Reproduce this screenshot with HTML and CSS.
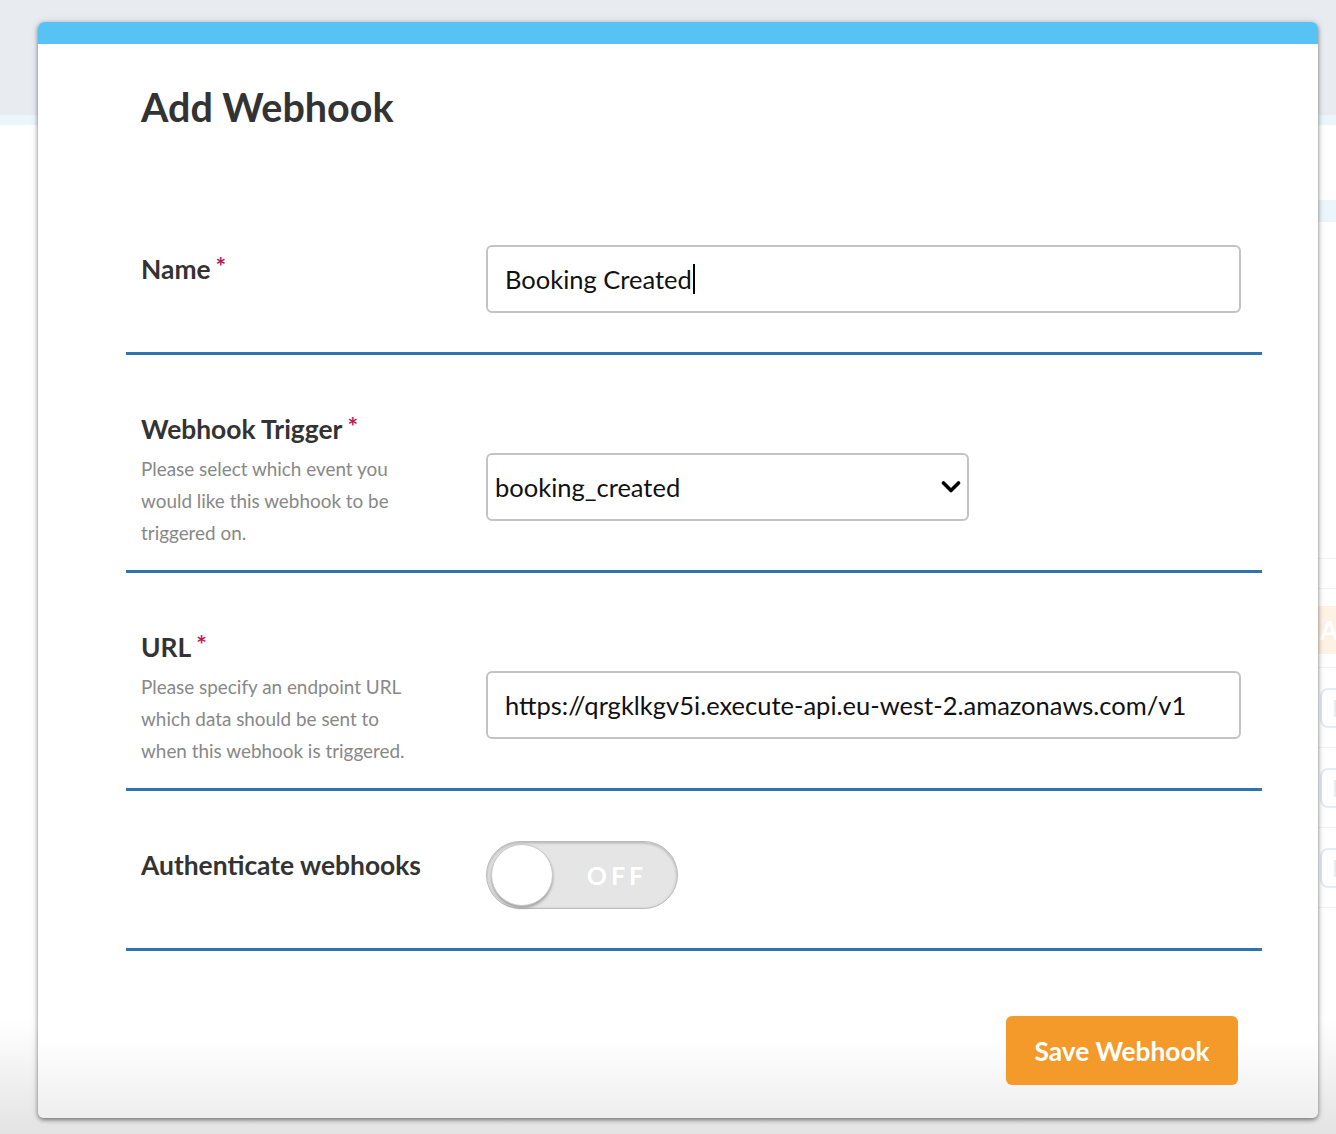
FILE: index.html
```html
<!DOCTYPE html>
<html lang="en">
<head>
<meta charset="utf-8">
<title>Add Webhook</title>
<link rel="stylesheet" href="styles.css">
</head>
<body>
<div class="app">
  <header class="app-header"></header>
  <div class="app-subbar"></div>
  <main class="app-main">
    <div class="app-thead"></div>
    <div class="app-list">
      <div class="app-sep"></div>
      <div class="app-row app-row--toolbar">
        <span class="app-spacer"></span>
        <span class="app-add">Add Webhook</span>
      </div>
      <div class="app-row">
        <span class="app-spacer"></span>
        <span class="app-edit">Edit</span>
      </div>
      <div class="app-row">
        <span class="app-spacer"></span>
        <span class="app-edit">Edit</span>
      </div>
      <div class="app-row">
        <span class="app-spacer"></span>
        <span class="app-edit">Edit</span>
      </div>
    </div>
  </main>
</div>

<div class="modal">
  <div class="modal-bar"></div>
  <div class="modal-body">
    <h1 class="modal-title">Add Webhook</h1>
    <form class="form">
      <div class="field">
        <div class="field-info">
          <label class="field-label">Name<span class="req">*</span></label>
        </div>
        <div class="field-control">
          <div class="text-input">Booking Created<span class="caret"></span></div>
        </div>
      </div>

      <div class="field">
        <div class="field-info">
          <label class="field-label">Webhook Trigger<span class="req">*</span></label>
          <p class="field-help">Please select which event you would like this webhook to be triggered on.</p>
        </div>
        <div class="field-control field-control--low">
          <div class="select-wrap">
            <select class="select">
              <option>booking_created</option>
            </select>
            <svg class="select-arrow" width="20" height="14" viewBox="0 0 20 14"><path d="M2.5 3 L10 10.5 L17.5 3" fill="none" stroke="#000" stroke-width="3.6" stroke-linecap="round" stroke-linejoin="round"/></svg>
          </div>
        </div>
      </div>

      <div class="field">
        <div class="field-info">
          <label class="field-label">URL<span class="req">*</span></label>
          <p class="field-help">Please specify an endpoint URL which data should be sent to when this webhook is triggered.</p>
        </div>
        <div class="field-control field-control--low">
          <div class="text-input">https://qrgklkgv5i.execute-api.eu-west-2.amazonaws.com/v1</div>
        </div>
      </div>

      <div class="field">
        <div class="field-info">
          <label class="field-label">Authenticate webhooks</label>
        </div>
        <div class="field-control">
          <div class="toggle">
            <span class="toggle-knob"></span>
            <span class="toggle-text">OFF</span>
          </div>
        </div>
      </div>
    </form>
    <div class="modal-footer">
      <button class="btn-save" type="button">Save Webhook</button>
    </div>
  </div>
</div>
</body>
</html>
```

FILE: styles.css
```css
* { box-sizing: border-box; }

html, body {
  margin: 0;
  padding: 0;
}

body {
  width: 1336px;
  height: 1134px;
  overflow: hidden;
  font-family: Lato, "Open Sans", "Liberation Sans", sans-serif;
  position: relative;
  background: #fff;
}

/* ---------- background app ---------- */
.app {
  height: 1134px;
  width: 1440px;
  background: linear-gradient(to bottom, #fff 0, #fff 1020px, #e3e3e3 1134px);
}

.app-header {
  height: 115px;
  background: #e8ecf0;
}

.app-subbar {
  height: 10px;
  background: #eaf6fc;
}

.app-main {
  margin-left: 1100px;
  padding-top: 75px;
}

.app-thead {
  height: 22px;
  background: #eaf5fc;
}

.app-list {
  margin-top: 336px;
}

.app-sep {
  height: 30px;
  border-top: 1px solid #f1f1f1;
}

.app-row {
  display: flex;
  align-items: center;
  height: 80px;
  border-bottom: 1px solid #f1f1f1;
}

.app-row--toolbar {
  border-top: 1px solid #f1f1f1;
  align-items: flex-start;
  padding-top: 17px;
}

.app-spacer {
  width: 218px;
  flex: none;
}

.app-add {
  background: #fdf2e4;
  color: #fff;
  font-weight: 700;
  font-size: 26px;
  line-height: 48px;
  padding: 0 8px 0 2px;
  white-space: nowrap;
}

.app-edit {
  margin-left: 2px;
  border: 2px solid #e3edf3;
  border-radius: 8px;
  color: #e1ebf1;
  font-size: 24px;
  line-height: 36px;
  padding: 0 14px 0 10px;
  white-space: nowrap;
}

/* ---------- modal ---------- */
.modal {
  position: absolute;
  top: 22px;
  left: 38px;
  width: 1280px;
  border-radius: 6px;
  overflow: hidden;
  background: linear-gradient(to bottom, #fff 0, #fff calc(100% - 80px), #eeeeee 100%);
  box-shadow: 0 2px 4px rgba(0, 0, 0, 0.45), 0 0 8px rgba(0, 0, 0, 0.12);
}

.modal-bar {
  height: 22px;
  background: #57c3f4;
}

.modal-body {
  padding: 0 56px 33px 88px;
}

.modal-title {
  margin: 39px 0 0 15px;
  font-size: 39.5px;
  line-height: 47px;
  font-weight: 700;
  color: #333;
}

.form {
  margin-top: 65px;
}

.field {
  display: grid;
  grid-template-columns: 345px 1fr;
  align-items: start;
  padding: 50px 21px 21px 15px;
  border-bottom: 3px solid #2e74ae;
}

.field-info {
  padding-top: 10px;
}

.field-label {
  display: block;
  font-size: 26.4px;
  line-height: 29px;
  font-weight: 700;
  color: #333;
}

.req {
  color: #c0175d;
  font-size: 25px;
  font-weight: 700;
  line-height: 0;
  margin-left: 5px;
  vertical-align: 3px;
}

.field-help {
  margin: 9px 0 0;
  font-size: 18.9px;
  line-height: 32px;
  color: #888;
  max-width: 275px;
}

.field-control {
  margin-bottom: 18px;
}

.field-control--low {
  margin-top: 48px;
  margin-bottom: 0;
}

.text-input {
  height: 68px;
  border: 2px solid #c3c3c3;
  border-radius: 6px;
  padding: 0 17px;
  display: flex;
  align-items: center;
  font-size: 25.5px;
  color: #111;
  background: #fff;
  white-space: nowrap;
  overflow: hidden;
}

.caret {
  display: inline-block;
  width: 2px;
  height: 30px;
  background: #000;
  margin-left: 1px;
}

.select-wrap {
  position: relative;
  width: 483px;
}

.select {
  -webkit-appearance: none;
  appearance: none;
  width: 100%;
  height: 68px;
  border: 2px solid #c3c3c3;
  border-radius: 6px;
  padding: 0 7px;
  font-family: inherit;
  font-size: 25.5px;
  color: #111;
  background: #fff;
  outline: none;
}

.select-arrow {
  position: absolute;
  right: 8px;
  top: 27px;
  pointer-events: none;
}

.toggle {
  width: 192px;
  height: 68px;
  border-radius: 34px;
  background: #e5e5e5;
  border: 1px solid #bcbcbc;
  box-shadow: inset 0 1px 3px rgba(0, 0, 0, 0.25);
  display: flex;
  align-items: center;
  padding-left: 4px;
}

.toggle-knob {
  width: 62px;
  height: 62px;
  border-radius: 50%;
  background: #fff;
  border: 1px solid #c8c8c8;
  box-shadow: 0 2px 3px rgba(0, 0, 0, 0.3);
  flex: none;
}

.toggle-text {
  flex: 1;
  text-align: center;
  color: #fff;
  font-size: 25px;
  font-weight: 700;
  letter-spacing: 4px;
  padding-left: 4px;
}

.modal-footer {
  display: flex;
  justify-content: flex-end;
  padding: 65px 24px 0 0;
}

.btn-save {
  width: 232px;
  height: 69px;
  border: none;
  border-radius: 6px;
  background: #f39a2b;
  color: #fff;
  font-family: inherit;
  font-size: 26.3px;
  font-weight: 700;
  cursor: pointer;
}
```
